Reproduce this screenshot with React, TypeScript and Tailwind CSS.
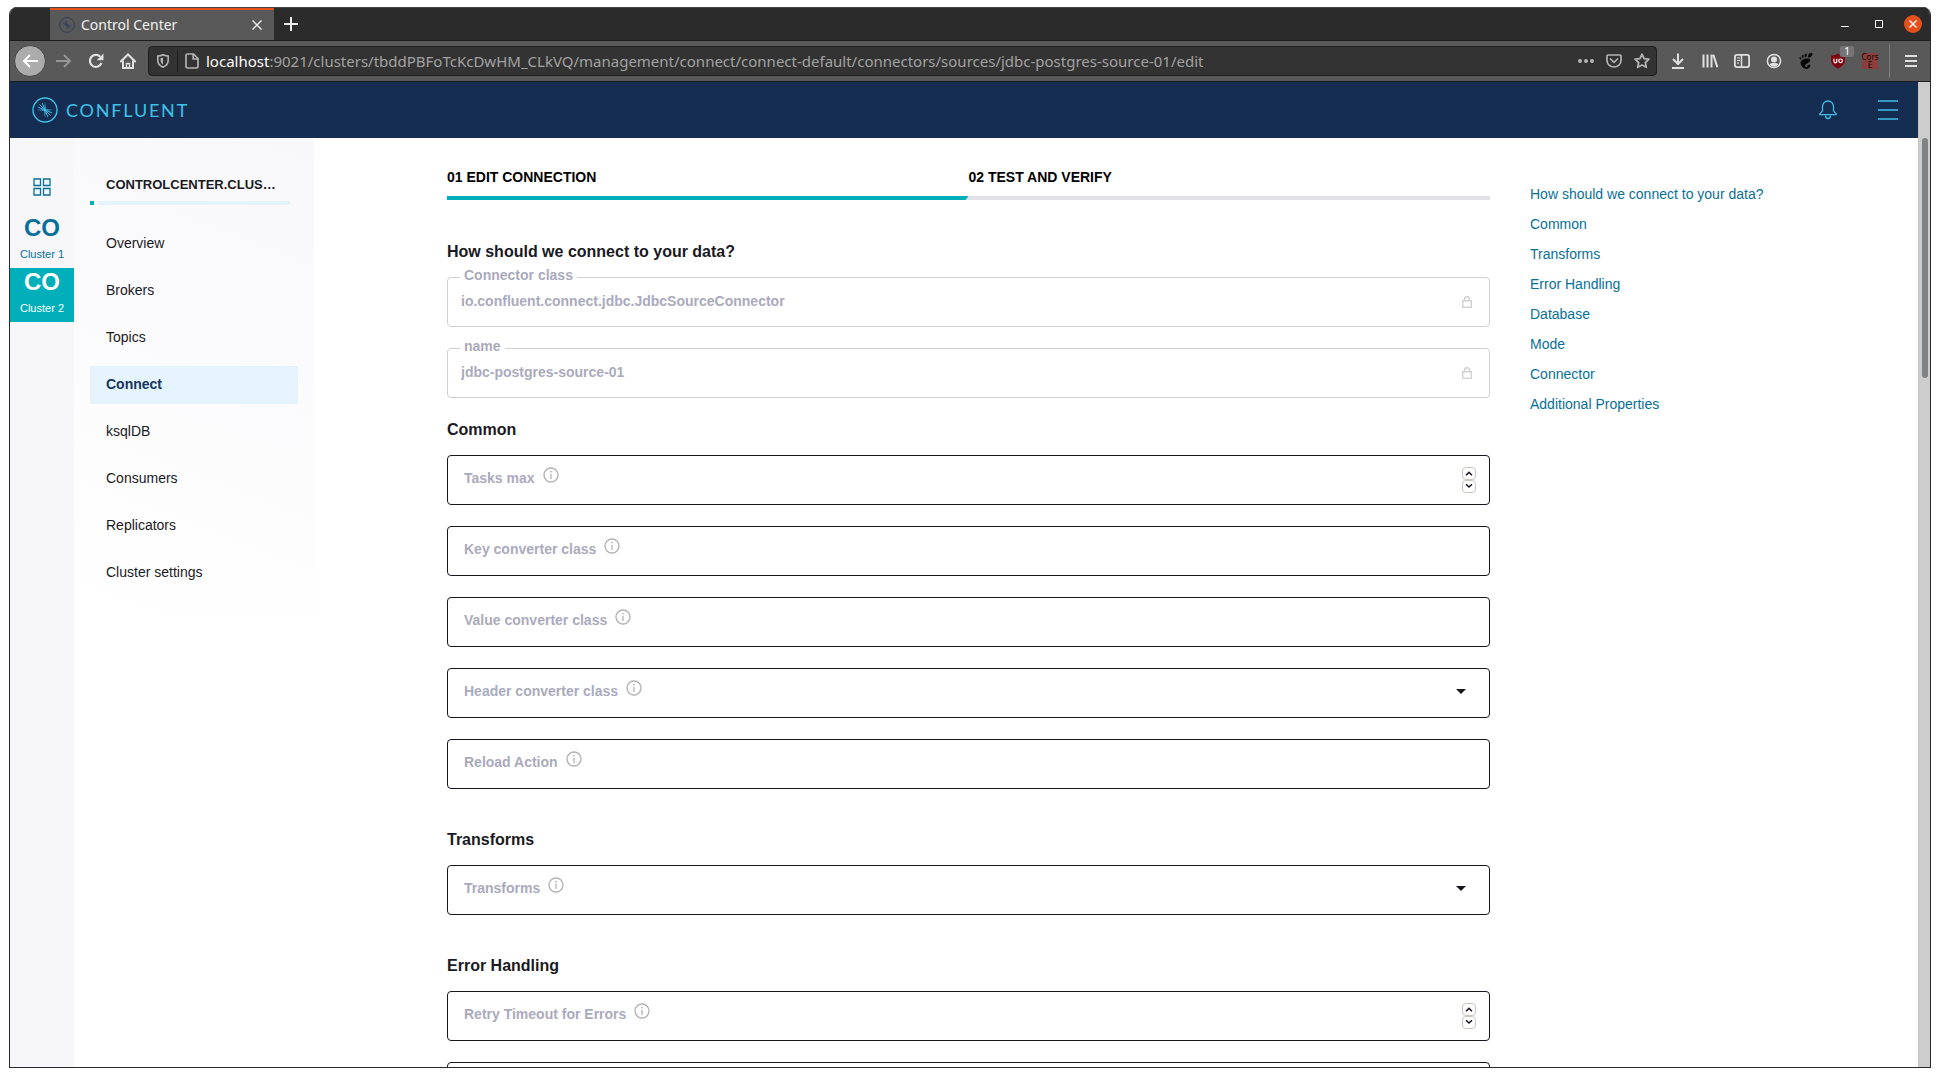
import React from 'react';
import { SiGnome } from 'react-icons/si';

const navItems = [
  'Overview',
  'Brokers',
  'Topics',
  'Connect',
  'ksqlDB',
  'Consumers',
  'Replicators',
  'Cluster settings',
];

const anchors = [
  'How should we connect to your data?',
  'Common',
  'Transforms',
  'Error Handling',
  'Database',
  'Mode',
  'Connector',
  'Additional Properties',
];

type FieldKind = 'text' | 'number' | 'select' | 'locked';

interface FieldProps {
  label: string;
  kind?: FieldKind;
  value?: string;
}

interface Section {
  title: string;
  fields: FieldProps[];
}

const sections: Section[] = [
  {
    title: 'Common',
    fields: [
      { label: 'Tasks max', kind: 'number' },
      { label: 'Key converter class' },
      { label: 'Value converter class' },
      { label: 'Header converter class', kind: 'select' },
      { label: 'Reload Action' },
    ],
  },
  {
    title: 'Transforms',
    fields: [{ label: 'Transforms', kind: 'select' }],
  },
  {
    title: 'Error Handling',
    fields: [{ label: 'Retry Timeout for Errors', kind: 'number' }, { label: '' }],
  },
];

const slug = (text: string) => text.toLowerCase().replace(/[^a-z0-9]+/g, '-');

const ConfluentMark: React.FC<{ className?: string }> = ({ className }) => (
  <svg viewBox="0 0 26 26" className={className} fill="none" stroke="currentColor" aria-hidden="true">
    <circle cx="13" cy="13" r="12" strokeWidth="1.4" />
    <path d="M13 5 13.8 12.2 21 13 13.8 13.8 13 21 12.2 13.8 5 13 12.2 12.2Z" fill="currentColor" stroke="none" />
    <path
      d="M12 12 7.4 7.4M12.3 11.5 10.1 5.9M11.5 12.3 5.9 10.1M14 14 18.6 18.6M13.7 14.5 15.9 20.1M14.5 13.7 20.1 15.9"
      strokeWidth="0.9"
    />
  </svg>
);

const InfoIcon = () => (
  <svg viewBox="0 0 16 16" className="h-4 w-4" fill="none" stroke="#b4b4b4" aria-hidden="true">
    <circle cx="8" cy="8" r="7" strokeWidth="1.4" />
    <path d="M8 6.8v5.2" strokeWidth="1.3" />
    <circle cx="8" cy="4.6" r="0.9" fill="#b4b4b4" stroke="none" />
  </svg>
);

const LockIcon = () => (
  <svg viewBox="0 0 10 12" className="h-3 w-[10px]" fill="none" stroke="#d3d3d3" strokeWidth="1.5" aria-hidden="true">
    <rect x="0.75" y="4.75" width="8.5" height="6.5" />
    <path d="M2.5 4.5V3.2a2.5 2.5 0 0 1 5 0v1.3" />
  </svg>
);

const Field: React.FC<FieldProps> = ({ label, kind = 'text', value }) => {
  const id = `field-${slug(label)}`;

  if (kind === 'locked') {
    return (
      <div className="relative flex h-[50px] items-center rounded border border-[#d0d0d4] pr-[17px]">
        <label htmlFor={id} className="absolute -top-[13px] left-3 bg-white px-1 text-sm leading-5 font-bold text-[#aaaabd]">
          {label}
        </label>
        <input
          id={id}
          type="text"
          readOnly
          defaultValue={value}
          className="h-full min-w-0 flex-1 bg-transparent pb-[2px] pl-[13px] text-sm font-bold text-[#aaaabd] outline-none"
        />
        <LockIcon />
      </div>
    );
  }

  return (
    <div className="relative h-[50px] rounded border border-[#16161f]">
      {kind === 'select' ? (
        <select id={id} className="h-full w-full appearance-none bg-transparent px-4 text-sm outline-none">
          <option value=""></option>
        </select>
      ) : (
        <input id={id} type="text" className="h-full w-full bg-transparent px-4 text-sm outline-none" />
      )}
      <label
        htmlFor={id}
        className="pointer-events-none absolute top-[11px] left-4 flex gap-2 text-sm leading-[22px] font-bold text-[#aaaabd]"
      >
        {label}
        <InfoIcon />
      </label>
      {kind === 'select' && (
        <svg viewBox="0 0 10 5" className="pointer-events-none absolute top-5 right-[23px] h-[5px] w-[10px]" aria-hidden="true">
          <path d="M0 0h10L5 5Z" fill="#16161f" />
        </svg>
      )}
      {kind === 'number' && (
        <div className="absolute top-[11px] right-[13px] flex flex-col">
          {['M4 8.2 7 5.4l3 2.8', 'M4 4.2 7 7l3-2.8'].map((path, i) => (
            <button
              key={path}
              type="button"
              aria-label={i === 0 ? 'Increase' : 'Decrease'}
              className="h-[13px] w-[14px] rounded border border-[#cbc4be]"
            >
              <svg viewBox="1 1 12 11" className="h-full w-full" fill="none" stroke="#16161f" strokeWidth="1.5">
                <path d={path} />
              </svg>
            </button>
          ))}
        </div>
      )}
    </div>
  );
};

const TabStrip = () => (
  <div className="flex h-[34px] shrink-0 border-t border-b border-t-[#474747] border-b-[#1c1c1c] bg-[#2b2b2b] pl-10">
    <div className="flex w-56 items-center border-t-2 border-[#e2501c] bg-[#595959] pr-3 pl-[9px] font-['Noto_Sans'] text-sm text-[#f2f2f2]">
      <ConfluentMark className="h-4 w-4 text-[#2a3b57]" />
      <span className="flex-1 pl-[6px]">Control Center</span>
      <button type="button" aria-label="Close tab">
        <svg viewBox="0 0 10 10" className="h-[10px] w-[10px]" stroke="#e8e8e8" strokeWidth="1.5">
          <path d="m0.5 0.5 9 9M9.5 0.5l-9 9" />
        </svg>
      </button>
    </div>
    <button type="button" aria-label="New tab" className="ml-[10px]">
      <svg viewBox="0 0 14 14" className="h-[14px] w-[14px]" stroke="#ececec" strokeWidth="2">
        <path d="M7 0v14M0 7h14" />
      </svg>
    </button>
    <div className="ml-auto flex items-center">
      <button type="button" aria-label="Minimize" className="flex w-[34px] justify-center">
        <svg viewBox="0 0 8 8" className="h-2 w-2" stroke="#fff">
          <path d="M0 6.5h8" />
        </svg>
      </button>
      <button type="button" aria-label="Maximize" className="flex w-[34px] justify-center">
        <svg viewBox="0 0 8 8" className="h-2 w-2" fill="none" stroke="#fff">
          <path d="M0.5 0.5h7v7h-7z" />
        </svg>
      </button>
      <button type="button" aria-label="Close window" className="flex w-[34px] justify-center">
        <span className="flex h-[18px] w-[18px] items-center justify-center rounded-full bg-[#e2501c]">
          <svg viewBox="0 0 8 8" className="h-2 w-2" stroke="#fff" strokeWidth="1.4">
            <path d="m0.5 0.5 7 7M7.5 0.5l-7 7" />
          </svg>
        </span>
      </button>
    </div>
  </div>
);

const AddressBar = () => (
  <div className="flex h-[30px] min-w-0 flex-1 items-center rounded border border-[#1f1f1f] bg-[#333] text-[#b4b4b4]">
    <svg viewBox="0 0 12 14" className="mx-2 h-[14px] w-3" fill="none" stroke="currentColor" strokeWidth="1.6" aria-hidden="true">
      <path d="M6 .8c1.5.8 3 1.1 5.2 1.2v4C11.2 9.5 9 12 6 13.2 3 12 .8 9.5 .8 6V2C3 1.9 4.5 1.6 6 .8Z" />
      <path d="M6 3.5v7c-1.6-1-2.5-2.500-2.5-4.500V4.200Z" fill="currentColor" stroke="none" />
    </svg>
    <span className="h-[22px] w-px bg-[#1f1f1f]" />
    <svg viewBox="0 0 14 16" className="mx-[7px] h-4 w-[14px]" fill="none" stroke="currentColor" strokeWidth="1.7" aria-hidden="true">
      <path d="M2.5 1h6L13 5.5v8A1.5 1.5 0 0 1 11.5 15h-9A1.5 1.5 0 0 1 1 13.5v-11A1.5 1.5 0 0 1 2.5 1Z" />
      <path d="M8.2 1v5H13" />
    </svg>
    <div className="min-w-0 flex-1 truncate font-['Noto_Sans'] text-[15px] leading-5 text-[#a2a2a2]">
      <span className="text-white">localhost</span>
      :9021/clusters/tbddPBFoTcKcDwHM_CLkVQ/management/connect/connect-default/connectors/sources/jdbc-postgres-source-01/edit
    </div>
    <div className="flex items-center gap-3 pr-[6px]">
      <button type="button" aria-label="Page actions">
        <svg viewBox="0 0 16 4" className="h-1 w-4" fill="currentColor">
          <circle cx="2" cy="2" r="2" />
          <circle cx="8" cy="2" r="2" />
          <circle cx="14" cy="2" r="2" />
        </svg>
      </button>
      <button type="button" aria-label="Save to Pocket">
        <svg viewBox="0 0 16 14" className="h-[14px] w-4" fill="none" stroke="currentColor" strokeWidth="1.7">
          <path d="M2 1h12a1 1 0 0 1 1 1v4.5a7 6.5 0 0 1-14 0V2a1 1 0 0 1 1-1Z" />
          <path d="m4.5 5 3.5 3.3L11.5 5" strokeLinecap="round" />
        </svg>
      </button>
      <button type="button" aria-label="Bookmark">
        <svg viewBox="0 0 16 16" className="h-4 w-4" fill="none" stroke="currentColor" strokeWidth="1.8" strokeLinejoin="round">
          <path d="m8 1.2 2.1 4.4 4.8.6-3.5 3.3.9 4.8L8 12l-4.3 2.3.9-4.8L1.1 6.200l4.8-.6Z" />
        </svg>
      </button>
    </div>
  </div>
);

const Toolbar = () => (
  <div className="flex h-[41px] shrink-0 items-center border-b border-[#1c1c1c] bg-[#595959] pr-[13px] pl-1 text-[#e0e0e0]">
    <button type="button" aria-label="Back" className="flex h-8 w-8 items-center justify-center rounded-full border border-[#444] bg-[#acacac]">
      <svg viewBox="0 0 16 14" className="h-[14px] w-4" fill="none" stroke="#fff" strokeWidth="2">
        <path d="M16 7H2M8 1 2 7l6 6" />
      </svg>
    </button>
    <button type="button" aria-label="Forward" className="ml-[10px]">
      <svg viewBox="0 0 16 14" className="h-[14px] w-4" fill="none" stroke="#969696" strokeWidth="1.8">
        <path d="M0 7h14M8 1l6 6-6 6" />
      </svg>
    </button>
    <button type="button" aria-label="Reload" className="ml-4">
      <svg viewBox="0 0 16 16" className="h-4 w-4" fill="none" stroke="currentColor" strokeWidth="2.2">
        <path d="M12.2 3.7A6 6 0 1 0 13.5 10" />
        <path d="M15.5.5v6.8H8.7Z" fill="currentColor" stroke="none" />
      </svg>
    </button>
    <button type="button" aria-label="Home" className="ml-4">
      <svg viewBox="0 0 16 16" className="h-4 w-4" fill="none" stroke="currentColor" strokeWidth="2">
        <path d="M.8 8.5 8 1.5l7.2 7" strokeLinecap="round" />
        <path d="M3 7.5V15h10V7.5" />
        <path d="M6.5 15v-4.5h3V15" strokeWidth="1.4" />
      </svg>
    </button>
    <div className="ml-3 flex min-w-0 flex-1">
      <AddressBar />
    </div>
    <div className="ml-[13px] flex items-center gap-4">
      <button type="button" aria-label="Downloads">
        <svg viewBox="0 0 16 16" className="h-4 w-4" fill="none" stroke="currentColor" strokeWidth="2">
          <path d="M8 .5v10M3 6l5 5 5-5M2 15h12" />
        </svg>
      </button>
      <button type="button" aria-label="Library">
        <svg viewBox="0 0 16 16" className="h-4 w-4" fill="none" stroke="currentColor" strokeWidth="2">
          <path d="M1.5 1.5v13M5.5 1.5v13M9.5 1.5v13M11.3 1.8l4 12.4" />
        </svg>
      </button>
      <button type="button" aria-label="Sidebars">
        <svg viewBox="0 0 16 14" className="h-[14px] w-4" fill="none" stroke="currentColor" strokeWidth="1.8">
          <rect x="0.9" y="0.9" width="14.2" height="12.2" rx="2" />
          <path d="M7.5 1v12" strokeWidth="1.5" />
          <path d="M3 4h3M3 6.5h3M3 9h2" strokeWidth="1" />
        </svg>
      </button>
      <button type="button" aria-label="Account">
        <svg viewBox="0 0 16 16" className="h-4 w-4" fill="none" stroke="currentColor" strokeWidth="1.5">
          <circle cx="8" cy="8" r="6.6" />
          <circle cx="8" cy="6.5" r="3" fill="currentColor" stroke="none" />
          <path d="M3.6 11.5c1.2-1.6 2.5-1.400 4.4-1.400s3.2-.2 4.4 1.400C11.2 13 9.8 13.6 8 13.6S4.8 13 3.6 11.5Z" fill="currentColor" stroke="none" />
        </svg>
      </button>
      <button type="button" aria-label="GNOME Shell integration">
        <SiGnome size={16} color="#050505" />
      </button>
      <button type="button" aria-label="uBlock" className="relative">
        <svg viewBox="0 0 16 16" className="h-4 w-4" aria-hidden="true">
          <path d="M8 .5c2 1.4 4.3 2 7 2v4.5c0 4-3 6.5-7 8.7C4 13.5 1 11 1 7V2.5c2.7 0 5-.6 7-2Z" fill="#800610" />
          <path d="M4 5.8v2.7q0 1.3 1.4 1.3t1.4-1.3V5.8" fill="none" stroke="#fff" strokeWidth="1.2" />
          <circle cx="10.6" cy="7.8" r="1.8" fill="none" stroke="#fff" strokeWidth="1.2" />
        </svg>
        <span className="absolute -top-[7px] left-[10px] h-[11px] w-[14px] rounded-xs bg-[#757577] text-center font-['Noto_Sans'] text-[10px] leading-[11px] text-white">
          1
        </span>
      </button>
      <button type="button" className="flex h-4 w-4 flex-col items-center bg-[#8c3f3c] font-['Noto_Sans'] text-[8px] leading-2 text-[#120707]">
        <span>Cors</span>
        <span>E</span>
      </button>
    </div>
    <span className="mx-[11px] h-[34px] w-px bg-[#7d7d7d]" />
    <button type="button" aria-label="Open menu" className="ml-1">
      <svg viewBox="0 0 12 12" className="h-3 w-3" stroke="currentColor" strokeWidth="2">
        <path d="M0 1h12M0 6h12M0 11h12" />
      </svg>
    </button>
  </div>
);

const Header = () => (
  <header className="flex h-14 shrink-0 items-center bg-[#162d52] pr-5 pl-[22px] text-[#3fc1e8]">
    <a href="#home" className="flex items-center gap-2">
      <ConfluentMark className="h-[26px] w-[26px]" />
      <span className="font-[Lato] text-lg tracking-widest">CONFLUENT</span>
    </a>
    <button type="button" aria-label="Alerts" className="ml-auto">
      <svg viewBox="0 0 18 20" className="h-5 w-[18px]" fill="none" stroke="currentColor" strokeWidth="1.3">
        <path d="M3.5 10.5V6.500a5.5 5.5 0 0 1 11 0v4c0 1.3 2.7 2.2 2.7 4.2H.8c0-2 2.7-2.900 2.7-4.200Z" strokeLinejoin="round" />
        <path d="M6.5 15.5a2.5 3 0 0 0 5 0" />
      </svg>
    </button>
    <button type="button" aria-label="Menu" className="ml-[41px]">
      <svg viewBox="0 0 20 20" className="h-5 w-5" stroke="currentColor" strokeWidth="1.4">
        <path d="M0 1h20M0 10h20M0 19h20" />
      </svg>
    </button>
  </header>
);

const ClusterRail = () => (
  <div className="w-16 shrink-0 bg-[#f7f7fa] pt-10">
    <a href="#clusters" aria-label="All clusters" className="flex justify-center text-[#07709a]">
      <svg viewBox="0 0 18 18" className="h-[18px] w-[18px]" fill="none" stroke="currentColor" strokeWidth="1.3">
        <path d="M1 1h6.5v6.5H1ZM10.5 1H17v6.5h-6.5ZM1 10.5h6.5V17H1ZM10.5 10.5H17V17h-6.5Z" />
      </svg>
    </a>
    <a href="#cluster-1" className="mt-[18px] block h-[54px] text-center text-[#07709a]">
      <span className="block text-2xl leading-7 font-bold">CO</span>
      <span className="mt-1 block text-[11px] leading-4">Cluster 1</span>
    </a>
    <a href="#cluster-2" className="block h-[54px] bg-[#00afba] text-center text-white">
      <span className="block text-2xl leading-7 font-bold">CO</span>
      <span className="mt-1 block text-[11px] leading-4">Cluster 2</span>
    </a>
  </div>
);

const SideNav = () => (
  <div className="w-60 shrink-0">
    <nav className="bg-[linear-gradient(201deg,#f8f8fb,#fff)] px-4 pt-[37px] pb-6">
      <p className="truncate px-4 text-[13px] leading-5 font-bold text-[#1a1a1f]">CONTROLCENTER.CLUSTER</p>
      <div className="mt-[6px] mr-2 flex h-1 gap-1">
        <span className="w-1 bg-[#00afba]" />
        <span className="flex-1 bg-[#e5f4fc]" />
      </div>
      <ul className="mt-5 flex flex-col gap-[9px]">
        {navItems.map((item) => (
          <li key={item}>
            <a
              href={`#${slug(item)}`}
              className={`block px-4 pt-2 pb-[10px] text-sm leading-5 ${
                item === 'Connect' ? 'bg-[#e5f4fc] font-bold text-[#173361]' : 'text-[#1a1a1f]'
              }`}
            >
              {item}
            </a>
          </li>
        ))}
      </ul>
    </nav>
  </div>
);

const Heading: React.FC<{ children: React.ReactNode }> = ({ children }) => (
  <h2 className="mb-[13px] text-base leading-6 font-bold text-[#1a1a1f]">{children}</h2>
);

const ConnectorForm = () => (
  <form className="min-w-0 flex-1 pt-[29px]">
    <ol className="flex text-sm leading-5 font-bold text-black">
      <li className="flex-1">01 EDIT CONNECTION</li>
      <li className="flex-1">02 TEST AND VERIFY</li>
    </ol>
    <div className="mt-[9px] h-1 bg-[#e0e0e6]">
      <div className="h-1 w-1/2 bg-[#00afba] [clip-path:polygon(0_0,100%_0,calc(100%-3px)_100%,0_100%)]" />
    </div>
    <section className="mt-10">
      <Heading>How should we connect to your data?</Heading>
      <div className="flex flex-col gap-[21px]">
        <Field label="Connector class" kind="locked" value="io.confluent.connect.jdbc.JdbcSourceConnector" />
        <Field label="name" kind="locked" value="jdbc-postgres-source-01" />
      </div>
    </section>
    {sections.map((section, index) => (
      <section key={section.title} className={index === 0 ? 'mt-5' : 'mt-[39px]'}>
        <Heading>{section.title}</Heading>
        <div className="flex flex-col gap-[21px]">
          {section.fields.map((field) => (
            <Field key={field.label} {...field} />
          ))}
        </div>
      </section>
    ))}
  </form>
);

const App = () => {
  return (
    <div className="h-screen bg-white px-[9px] pt-[7px] pb-[9px] font-['Liberation_Sans',sans-serif]">
      <div className="flex h-full flex-col overflow-hidden rounded-t-lg border border-t-0 border-[#2b2b2b]">
        <TabStrip />
        <Toolbar />
        <div className="flex min-h-0 flex-1">
          <div className="flex min-w-0 flex-1 flex-col">
            <Header />
            <div className="flex min-h-0 flex-1 overflow-hidden">
              <ClusterRail />
              <SideNav />
              <main className="flex min-w-0 flex-1 pl-[133px]">
                <ConnectorForm />
                <aside className="w-[428px] shrink-0 pt-[46px] pl-10">
                  <ul className="flex flex-col gap-[10px] text-sm leading-5 text-[#07709a]">
                    {anchors.map((anchor) => (
                      <li key={anchor}>
                        <a href={`#${slug(anchor)}`}>{anchor}</a>
                      </li>
                    ))}
                  </ul>
                </aside>
              </main>
            </div>
          </div>
          <div className="w-3 shrink-0 border-l border-[#c9c2bb] bg-[#cdcdcd] px-[2px] pt-14">
            <div className="mx-auto h-60 w-[6px] rounded-full bg-[#7f8384]" />
          </div>
        </div>
      </div>
    </div>
  );
};

export default App;
